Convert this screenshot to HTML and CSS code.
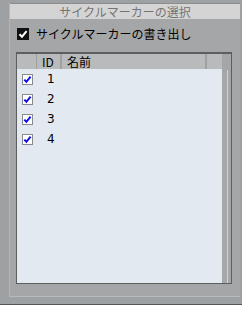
FILE: index.html
```html
<!DOCTYPE html>
<html>
<head>
<meta charset="utf-8">
<link rel="stylesheet" href="styles.css">
</head>
<body>
<div class="window">
  <div class="panel">
    <div class="titlebar">サイクルマーカーの選択</div>
    <div class="export-row">
      <span class="bigcheck">
        <svg width="12" height="12" viewBox="0 0 12 12"><rect width="12" height="12" fill="#111"/><path d="M2.5 6.2 L5 8.7 L9.6 3.2" stroke="#fff" stroke-width="2" fill="none"/></svg>
      </span>
      <span class="export-label">サイクルマーカーの書き出し</span>
    </div>
    <div class="table">
      <div class="table-main">
        <div class="thead">
          <div class="th th-check"></div>
          <div class="th th-id">ID</div>
          <div class="th th-name">名前</div>
          <div class="th th-extra"></div>
        </div>
        <div class="tbody">
          <div class="row"><span class="cb"><svg width="11" height="11" viewBox="0 0 11 11"><rect x="0.5" y="0.5" width="10" height="10" fill="#fff" stroke="#8a8a8a"/><path d="M2.3 5.6 L4.4 7.8 L8.6 2.6" stroke="#1010e8" stroke-width="2" fill="none"/></svg></span><span class="id">1</span></div>
          <div class="row"><span class="cb"><svg width="11" height="11" viewBox="0 0 11 11"><rect x="0.5" y="0.5" width="10" height="10" fill="#fff" stroke="#8a8a8a"/><path d="M2.3 5.6 L4.4 7.8 L8.6 2.6" stroke="#1010e8" stroke-width="2" fill="none"/></svg></span><span class="id">2</span></div>
          <div class="row"><span class="cb"><svg width="11" height="11" viewBox="0 0 11 11"><rect x="0.5" y="0.5" width="10" height="10" fill="#fff" stroke="#8a8a8a"/><path d="M2.3 5.6 L4.4 7.8 L8.6 2.6" stroke="#1010e8" stroke-width="2" fill="none"/></svg></span><span class="id">3</span></div>
          <div class="row"><span class="cb"><svg width="11" height="11" viewBox="0 0 11 11"><rect x="0.5" y="0.5" width="10" height="10" fill="#fff" stroke="#8a8a8a"/><path d="M2.3 5.6 L4.4 7.8 L8.6 2.6" stroke="#1010e8" stroke-width="2" fill="none"/></svg></span><span class="id">4</span></div>
        </div>
      </div>
      <div class="table-side">
        <div class="side-top"></div>
        <div class="side-track"></div>
      </div>
    </div>
  </div>
</div>
</body>
</html>
```
FILE: styles.css
```css
html, body {
  margin: 0;
  padding: 0;
}
body {
  width: 242px;
  height: 309px;
  background: #ffffff;
  font-family: "Noto Sans CJK JP", "Noto Sans", sans-serif;
  overflow: hidden;
}
.window {
  height: 305px;
  background: #9ea1a3;
  border-bottom: 1px solid #555;
  padding-top: 3px;
  box-sizing: border-box;
  display: flex;
  flex-direction: column;
}
.panel {
  margin-left: 9px;
  margin-right: 2px;
  height: 294px;
  background: #a5a6a7;
  border-left: 1px solid #b4b5b6;
  border-bottom: 1px solid #b8b9ba;
  box-sizing: border-box;
  display: flex;
  flex-direction: column;
}
.titlebar {
  height: 16px;
  border-top: 1px solid #8c8c8c;
  background: #d4d4d4;
  color: #747474;
  font-size: 12px;
  line-height: 15px;
  text-align: center;
  box-sizing: border-box;
}
.export-row {
  display: flex;
  align-items: center;
  height: 16px;
  margin-top: 7px;
  padding-left: 7px;
}
.bigcheck {
  display: flex;
  width: 12px;
  height: 12px;
}
.export-label {
  margin-left: 7px;
  font-size: 12px;
  color: #000;
  line-height: 16px;
}
.table {
  margin-top: 10px;
  margin-left: 6px;
  width: 216px;
  height: 232px;
  border: 1px solid #5e5e5e;
  border-top-width: 2px;
  box-sizing: border-box;
  display: flex;
}
.table-main {
  width: 205px;
  display: flex;
  flex-direction: column;
}
.thead {
  display: flex;
  height: 15px;
  background: #b9babb;
}
.th {
  font-size: 12px;
  line-height: 15px;
  color: #000;
  box-sizing: border-box;
}
.th-check {
  width: 20px;
  border-right: 1px solid #a0a0a0;
}
.th-id {
  width: 25px;
  border-right: 2px solid #a0a0a0;
  padding-left: 5px;
}
.th-name {
  width: 145px;
  border-right: 2px solid #a0a0a0;
  padding-left: 5px;
}
.th-extra {
  flex: 1;
}
.tbody {
  flex: 1;
  background: #e3e9f0;
}
.row {
  display: flex;
  align-items: center;
  height: 20px;
}
.cb {
  display: flex;
  margin-left: 5px;
  width: 11px;
  height: 11px;
}
.id {
  margin-left: 14px;
  font-size: 12px;
  color: #000;
  font-family: "DejaVu Sans", sans-serif;
}
.table-side {
  flex: 1;
  display: flex;
  flex-direction: column;
  background: #a5a6a7;
}
.side-top {
  height: 16px;
}
.side-track {
  flex: 1;
  margin-left: 5px;
  width: 1px;
  background: #d0d2d4;
}
```
